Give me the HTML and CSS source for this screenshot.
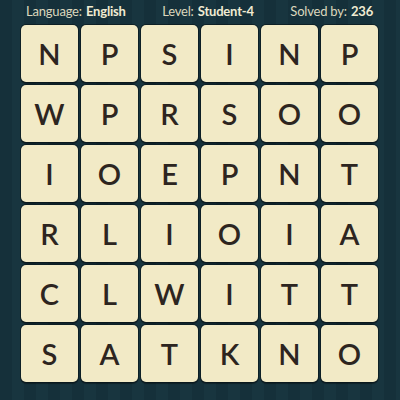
FILE: index.html
```html
<!DOCTYPE html>
<html>
<head>
<meta charset="utf-8">
<link rel="stylesheet" href="styles.css">
</head>
<body>
<div class="page">
  <div class="header">
    <span class="item">Language: <b>English</b></span>
    <span class="item">Level: <b>Student-4</b></span>
    <span class="item">Solved by: <b>236</b></span>
  </div>
  <div class="grid">
    <div class="tile">N</div><div class="tile">P</div><div class="tile">S</div><div class="tile">I</div><div class="tile">N</div><div class="tile">P</div>
    <div class="tile">W</div><div class="tile">P</div><div class="tile">R</div><div class="tile">S</div><div class="tile">O</div><div class="tile">O</div>
    <div class="tile">I</div><div class="tile">O</div><div class="tile">E</div><div class="tile">P</div><div class="tile">N</div><div class="tile">T</div>
    <div class="tile">R</div><div class="tile">L</div><div class="tile">I</div><div class="tile">O</div><div class="tile">I</div><div class="tile">A</div>
    <div class="tile">C</div><div class="tile">L</div><div class="tile">W</div><div class="tile">I</div><div class="tile">T</div><div class="tile">T</div>
    <div class="tile">S</div><div class="tile">A</div><div class="tile">T</div><div class="tile">K</div><div class="tile">N</div><div class="tile">O</div>
  </div>
</div>
</body>
</html>
```
FILE: styles.css
```css
html, body {
  margin: 0;
  padding: 0;
}
body {
  width: 400px;
  height: 400px;
  overflow: hidden;
  background: repeating-linear-gradient(90deg, #15303a 0 12px, #18353f 12px 24px);
  font-family: Lato, "Open Sans", sans-serif;
}
.page {
  display: flex;
  flex-direction: column;
}
.header {
  display: flex;
  justify-content: space-between;
  align-items: center;
  height: 23px;
  padding: 0 27px 0 26px;
  color: #dcd7bd;
  font-size: 13px;
  letter-spacing: -0.2px;
  line-height: 1;
}
.header b {
  font-weight: 700;
  color: #f0ebd2;
  margin-left: 1px;
}
.grid {
  display: grid;
  grid-template-columns: repeat(6, 57px);
  grid-auto-rows: 57px;
  gap: 3px;
  padding: 2px 0 0 21px;
}
.tile {
  background: #f2eac6;
  border-radius: 5px;
  box-shadow: 0 0 0 1px rgba(8, 20, 24, 0.6), 0 2px 1px rgba(0, 0, 0, 0.35);
  display: flex;
  align-items: center;
  justify-content: center;
  color: #2d2520;
  font-size: 29px;
  font-weight: 600;
  line-height: 1;
}
```
